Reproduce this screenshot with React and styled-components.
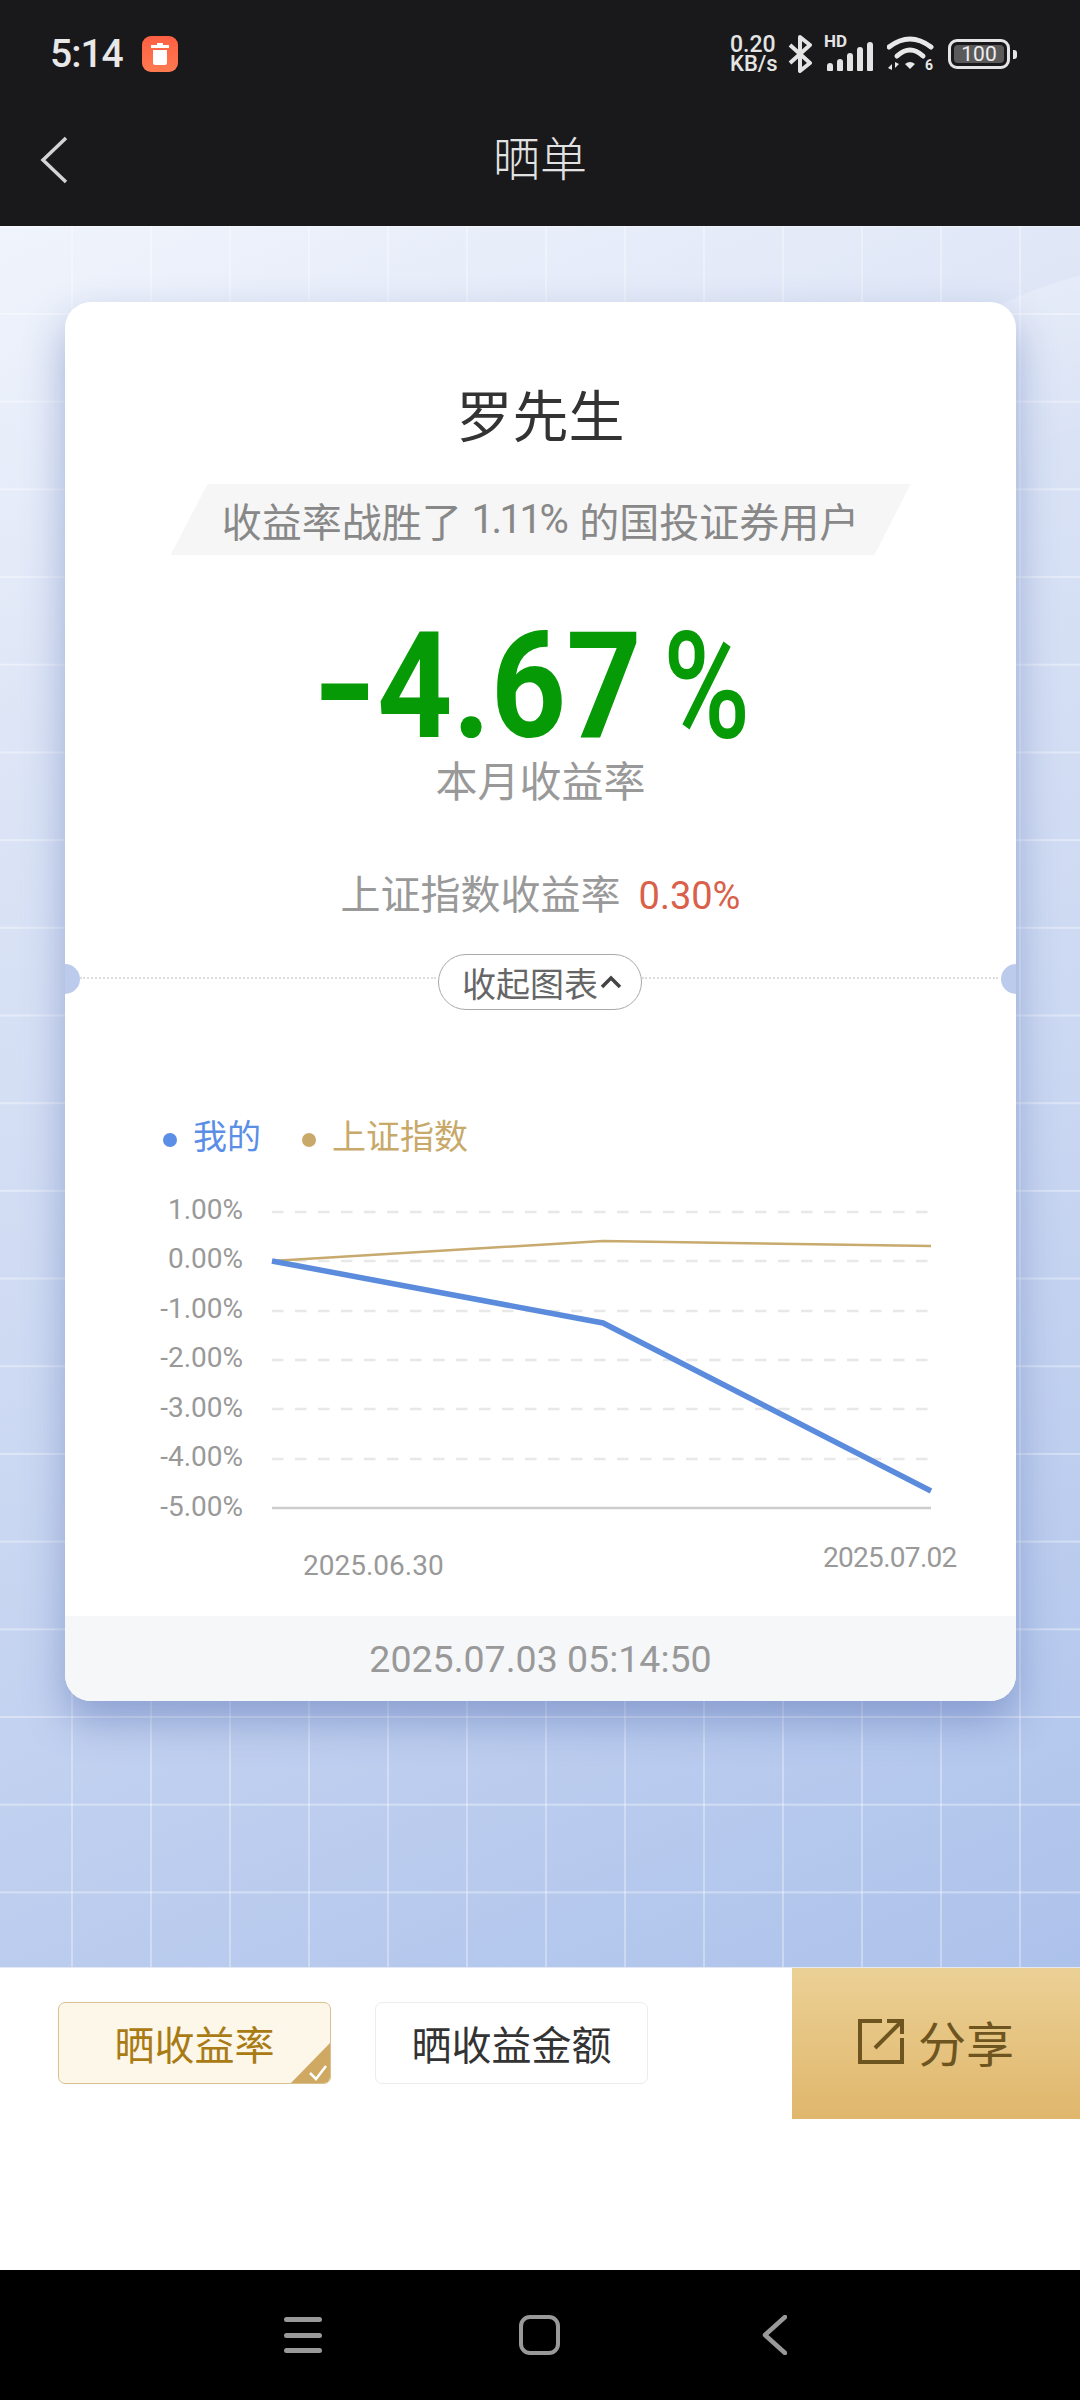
import styled, { createGlobalStyle } from "styled-components";

const GlobalStyle = createGlobalStyle`
  html, body {
    margin: 0;
    padding: 0;
    background: #fff;
  }
  body {
    font-family: Roboto, "Noto Sans CJK SC", sans-serif;
  }
`

const Page = styled.div`
  width: 1080px;
  height: 2400px;
  display: flex;
  flex-direction: column;
  overflow: hidden;
`

/* ---------- top bars ---------- */
const TopArea = styled.header`
  height: 226px;
  background: #19191b;
  flex-shrink: 0;
`
const StatusBar = styled.div`
  height: 108px;
  padding: 0 63px 0 50px;
  display: flex;
  align-items: center;
  justify-content: space-between;
`
const StatusLeft = styled.div`
  display: flex;
  align-items: center;
  gap: 19px;
`
const Clock = styled.span`
  font-size: 39px;
  font-weight: 500;
  color: #e8e8e8;
  letter-spacing: -1px;
`
const AppBadge = styled.span`
  width: 36px;
  height: 36px;
  border-radius: 9px;
  background: linear-gradient(180deg, #ff5f43, #ff7a4f);
  display: flex;
  align-items: center;
  justify-content: center;
`
const StatusRight = styled.div`
  display: flex;
  align-items: center;
`
const NetSpeed = styled.div`
  display: flex;
  flex-direction: column;
  align-items: flex-start;
  width: 58px;
  color: #e4e4e4;
  font-weight: 500;
  font-size: 23px;
  line-height: 19px;
  small {
    font-size: 22px;
    font-weight: 500;
  }
`
const SignalWrap = styled.div`
  position: relative;
  margin: 0 14px 0 15px;
  width: 46px;
  height: 34px;
  display: flex;
  align-items: flex-end;
  gap: 4px;
`
const HdTag = styled.span`
  position: absolute;
  left: -3px;
  top: -6px;
  font-size: 17px;
  font-weight: 700;
  color: #e4e4e4;
`
const SignalBar = styled.i`
  display: block;
  width: 6px;
  height: ${(p) => p.$h}px;
  background: #e4e4e4;
  border-radius: 3px 3px 1px 1px;
`
const Battery = styled.div`
  margin-left: 13px;
  display: flex;
  align-items: center;
  gap: 3px;
`
const BatteryShell = styled.div`
  width: 62px;
  height: 30px;
  box-sizing: border-box;
  border: 3px solid #e4e4e4;
  border-radius: 9px;
  padding: 3px;
  display: flex;
`
const BatteryFill = styled.span`
  flex: 1;
  background: #5a5a5a;
  border-radius: 4px;
  color: #eee;
  font-size: 21px;
  line-height: 18px;
  text-align: center;
`
const BatteryNub = styled.i`
  display: block;
  width: 4px;
  height: 9px;
  border-radius: 0 3px 3px 0;
  background: #e4e4e4;
`
const NavBar = styled.div`
  position: relative;
  height: 118px;
  display: flex;
  align-items: flex-start;
  justify-content: center;
`
const BackBtn = styled.svg`
  position: absolute;
  left: 40px;
  top: 28px;
`
const NavTitle = styled.h1`
  margin: 0;
  padding-top: 21px;
  font-size: 47px;
  line-height: 62px;
  font-weight: 300;
  color: #e2e2e2;
`

/* ---------- grid backdrop + card ---------- */
const Hero = styled.section`
  flex: 1;
  padding: 76px 64px 0 65px;
  background-color: #cfdbf3;
  background-image:
    linear-gradient(90deg, rgba(255, 255, 255, 0.32) 2px, transparent 2px),
    linear-gradient(180deg, rgba(255, 255, 255, 0.36) 2px, transparent 2px),
    radial-gradient(circle 439px at 1190px 474px, transparent 65%, rgba(255, 255, 255, 0.22) 99.7%, transparent 100%),
    linear-gradient(158deg, #f0f4fc 0%, #dde5f6 24%, #cbd8f2 58%, #adc2eb 100%);
  background-size: 79px 100%, 100% 87.7px, 100% 400px, 100% 100%;
  background-position: 71px 0, 0 87px, 0 0, 0 0;
  background-repeat: repeat, repeat, no-repeat, no-repeat;
`
const Card = styled.article`
  position: relative;
  height: 1399px;
  background: #fff;
  border-radius: 26px;
  box-shadow: 0 20px 40px rgba(82, 106, 176, 0.48);
  display: flex;
  flex-direction: column;
  align-items: center;
`
const Name = styled.h2`
  margin: 84px 0 0;
  font-size: 56px;
  line-height: 64px;
  font-weight: 400;
  color: #333;
`
const Slogan = styled.div`
  margin-top: 34px;
  width: 740px;
  height: 71px;
  background: #f6f6f6;
  clip-path: polygon(37px 0, 100% 0, 704px 100%, 0 100%);
  display: flex;
  align-items: center;
  justify-content: center;
  font-size: 40px;
  color: #888;
  white-space: pre;
`
const TightNum = styled.span`
  letter-spacing: -2.5px;
  margin-right: 3px;
`
const BigValue = styled.div`
  margin-top: 72px;
  height: 120px;
  display: flex;
  align-items: flex-start;
  line-height: 120px;
  font-size: 148px;
  color: #069a06;
`
/* the sign, figures and percent are squeezed or stretched on their own to get the narrow numeric look */
const BigPart = styled.span`
  display: block;
  width: ${(p) => p.$w}px;
  font-weight: ${(p) => p.$weight};
  transform: scaleX(${(p) => p.$scale});
  transform-origin: left center;
`
const ValueLabel = styled.div`
  margin-top: 11px;
  font-size: 42px;
  line-height: 50px;
  color: #999;
`
const Compare = styled.div`
  margin-top: 63px;
  display: flex;
  align-items: center;
  gap: 18px;
  font-size: 40px;
  line-height: 50px;
  color: #999;
`
const CompareValue = styled.span`
  font-size: 38px;
  color: #d9604a;
`
const Divider = styled.div`
  align-self: stretch;
  margin-top: 33px;
  height: 56px;
  padding: 0 18px 0 15px;
  display: flex;
  align-items: flex-start;
`
const DashLine = styled.i`
  flex: 1;
  margin-top: 23px;
  border-top: 2px dotted #ddd;
`
const Notch = styled.i`
  position: absolute;
  top: 662px;
  ${(p) => (p.$side === "left" ? "left: 0; border-radius: 0 15px 15px 0;" : "right: 0; border-radius: 15px 0 0 15px;")}
  width: 15px;
  height: 30px;
  background: #bccbeb;
`
const FoldBtn = styled.button`
  width: 204px;
  height: 56px;
  margin-left: 2px;
  box-sizing: border-box;
  border: 1px solid #aaa;
  border-radius: 28px;
  background: #fff;
  padding: 0 0 0 4px;
  display: flex;
  align-items: center;
  justify-content: center;
  gap: 2px;
  font-family: inherit;
  font-size: 34px;
  color: #666;
`
const Legend = styled.div`
  align-self: flex-start;
  margin: 107px 0 0 98px;
  display: flex;
  gap: 41px;
  font-size: 34px;
  line-height: 40px;
`
const LegendItem = styled.span`
  display: flex;
  align-items: center;
  gap: 16px;
  color: ${(p) => p.$color};
  &::before {
    content: "";
    width: 14px;
    height: 14px;
    margin-top: 5px;
    border-radius: 50%;
    background: ${(p) => p.$color};
  }
`
const Chart = styled.svg`
  display: block;
  margin-top: 23px;
  text {
    font-family: Roboto, sans-serif;
    font-size: 28px;
    fill: #999;
  }
`
const CardFooter = styled.div`
  align-self: stretch;
  margin-top: auto;
  height: 85px;
  border-radius: 0 0 26px 26px;
  background: #f6f7f9;
  display: flex;
  align-items: center;
  justify-content: center;
  font-size: 37.5px;
  color: #999;
`

/* ---------- bottom actions ---------- */
const ActionBar = styled.div`
  height: 303px;
  flex-shrink: 0;
  background: #fff;
  border-top: 1px solid #e3e8f3;
  box-sizing: border-box;
  display: flex;
  align-items: flex-start;
  padding-left: 58px;
`
const Toggle = styled.button`
  position: relative;
  margin: 34px 44px 0 0;
  width: 273px;
  height: 82px;
  box-sizing: border-box;
  border: 1px solid ${(p) => (p.$active ? "#d9c08e" : "#ececec")};
  border-radius: 7px;
  background: ${(p) => (p.$active ? "#fdf7ea" : "#fff")};
  color: ${(p) => (p.$active ? "#a97b14" : "#333")};
  font-family: inherit;
  font-size: 40px;
  overflow: hidden;
  padding: 0;
`
const CornerTick = styled.svg`
  position: absolute;
  right: -1px;
  bottom: -1px;
`
const ShareBtn = styled.button`
  margin-left: auto;
  width: 288px;
  height: 151px;
  border: 0;
  padding: 0 0 6px;
  background: linear-gradient(180deg, #ebd095, #e0b76c);
  display: flex;
  align-items: center;
  justify-content: center;
  gap: 14px;
  font-family: inherit;
  font-size: 48px;
  color: #6e5520;
`

/* ---------- system nav ---------- */
const SystemNav = styled.nav`
  height: 130px;
  flex-shrink: 0;
  background: #000;
  display: flex;
  justify-content: center;
  align-items: flex-start;
  gap: 197px;
  padding: 45px 9px 0 0;
  box-sizing: border-box;
`
const NavBack = styled.svg`
  margin-left: 5px;
`

const axis = ["1.00%", "0.00%", "-1.00%", "-2.00%", "-3.00%", "-4.00%"];

const App = () => {
  return (
    <Page>
      <GlobalStyle />
      <TopArea>
        <StatusBar>
          <StatusLeft>
            <Clock>5:14</Clock>
            <AppBadge>
              <svg width="22" height="22" viewBox="0 0 22 22" fill="#fff">
                <path d="M8 0h6v2h6v3H2V2h6z" />
                <path d="M4 7h14v13a2 2 0 0 1-2 2H6a2 2 0 0 1-2-2z" />
              </svg>
            </AppBadge>
          </StatusLeft>
          <StatusRight>
            <NetSpeed>
              <span>0.20</span>
              <small>KB/s</small>
            </NetSpeed>
            <svg width="24" height="38" viewBox="0 0 24 38" fill="none" stroke="#e4e4e4" strokeWidth="4" strokeLinejoin="round">
              <path d="M2 10 22 28 12 36V2l10 8L2 28" />
            </svg>
            <SignalWrap>
              <HdTag>HD</HdTag>
              {[8, 12, 18, 24, 29].map((h) => <SignalBar key={h} $h={h} />)}
            </SignalWrap>
            <svg width="48" height="40" viewBox="0 -2 48 40" fill="none" stroke="#e8e8e8">
              <path d="M2 11Q23-5 44 11" strokeWidth="5" strokeLinecap="round" />
              <path d="M10 20Q23 8 36 20" strokeWidth="5" strokeLinecap="round" />
              <path d="M18 28q5-4 10 0l-5 5z" fill="#e8e8e8" stroke="none" />
              <path d="M5 34v-6l-4 4zM8 26v6l4-4z" fill="#e8e8e8" stroke="none" />
              <text x="38" y="34" fontSize="14" fontWeight="700" fill="#e8e8e8" stroke="none" fontFamily="Roboto">6</text>
            </svg>
            <Battery>
              <BatteryShell>
                <BatteryFill>100</BatteryFill>
              </BatteryShell>
              <BatteryNub />
            </Battery>
          </StatusRight>
        </StatusBar>
        <NavBar>
          <BackBtn width="28" height="48" viewBox="0 0 28 48" fill="none" stroke="#d4d4d4" strokeWidth="3.5">
            <path d="M26 2 3 24l23 22" />
          </BackBtn>
          <NavTitle>晒单</NavTitle>
        </NavBar>
      </TopArea>

      <Hero>
        <Card>
          <Name>罗先生</Name>
          <Slogan>
            收益率战胜了 <TightNum>1.11%</TightNum> 的国投证券用户
          </Slogan>
          <BigValue>
            <BigPart $w={65} $weight={700} $scale={1.14}>-</BigPart>
            <BigPart $w={286} $weight={700} $scale={0.89}>4.67</BigPart>
            <BigPart $w={106} $weight={500} $scale={0.8}>%</BigPart>
          </BigValue>
          <ValueLabel>本月收益率</ValueLabel>
          <Compare>
            上证指数收益率
            <CompareValue>0.30%</CompareValue>
          </Compare>
          <Notch $side="left" />
          <Notch $side="right" />
          <Divider>
            <DashLine />
            <FoldBtn>
              收起图表
              <svg width="22" height="14" viewBox="0 0 22 14" fill="none" stroke="#444" strokeWidth="3.5">
                <path d="M2 12 11 3l9 9" />
              </svg>
            </FoldBtn>
            <DashLine />
          </Divider>
          <Legend>
            <LegendItem $color="#5b8ee6">我的</LegendItem>
            <LegendItem $color="#c8a96a">上证指数</LegendItem>
          </Legend>
          {/* viewBox runs in page coordinates so the series read as plotted */}
          <Chart width="951" height="420" viewBox="65 1180 951 420">
            {[1212, 1261, 1311, 1360, 1409, 1459].map((y) => (
              <line key={y} x1="272" x2="931" y1={y} y2={y} stroke="#e8e8e8" strokeWidth="2.5" strokeDasharray="11.5 11.5" />
            ))}
            <line x1="272" x2="931" y1="1508" y2="1508" stroke="#ccc" strokeWidth="2.5" />
            {axis.map((label, idx) => (
              <text key={label} x="243" y={1219 + idx * 49.4} textAnchor="end">{label}</text>
            ))}
            <text x="243" y="1516" textAnchor="end">-5.00%</text>
            <polyline points="272,1261 603,1241 931,1246" fill="none" stroke="#c8a96e" strokeWidth="2.5" />
            <polyline points="272,1261 603,1323 931,1491" fill="none" stroke="#5b8bdc" strokeWidth="5.5" />
            <text x="303" y="1575">2025.06.30</text>
            <text x="823" y="1567" letterSpacing="-0.7">2025.07.02</text>
          </Chart>
          <CardFooter>2025.07.03 05:14:50</CardFooter>
        </Card>
      </Hero>

      <ActionBar>
        <Toggle $active>
          晒收益率
          <CornerTick width="41" height="42" viewBox="0 0 41 42">
            <path d="M41 0v42H0z" fill="#cfa862" />
            <path d="M20 31l6 6 10-13" fill="none" stroke="#fff" strokeWidth="2.5" />
          </CornerTick>
        </Toggle>
        <Toggle>晒收益金额</Toggle>
        <ShareBtn>
          <svg width="46" height="46" viewBox="0 0 46 46" fill="none" stroke="#6e5520" strokeWidth="4">
            <path d="M24 3H2v41h42V20" />
            <path d="M17 30 42 5M29 3h15v13" />
          </svg>
          分享
        </ShareBtn>
      </ActionBar>

      <SystemNav>
        <svg width="38" height="40" viewBox="0 0 38 40" fill="#999">
          <rect y="2" width="38" height="5" rx="2.5" />
          <rect y="18" width="38" height="5" rx="2.5" />
          <rect y="33" width="38" height="5" rx="2.5" />
        </svg>
        <svg width="41" height="40" viewBox="0 0 41 40" fill="none" stroke="#999" strokeWidth="4">
          <rect x="2" y="2" width="37" height="36" rx="9" />
        </svg>
        <NavBack width="25" height="40" viewBox="0 0 25 40" fill="none" stroke="#999" strokeWidth="4.5" strokeLinecap="round" strokeLinejoin="round">
          <path d="M23 2 3 20l20 18" />
        </NavBack>
      </SystemNav>
    </Page>
  )
}

export default App;
